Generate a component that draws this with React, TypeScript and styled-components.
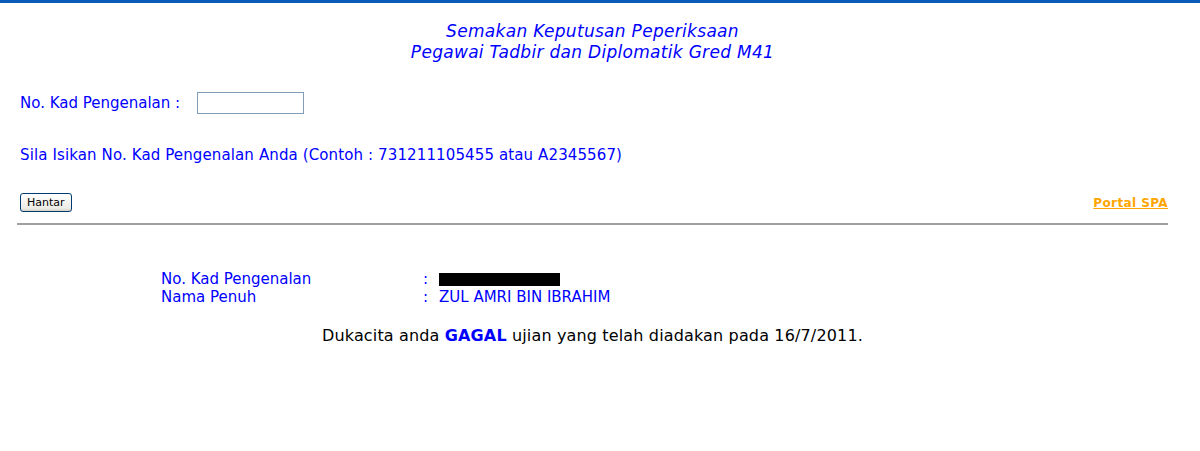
import React from "react";
import styled, { createGlobalStyle } from "styled-components";

const Global = createGlobalStyle`
  html, body { margin: 0; padding: 0; background: #fff; }
  body { font-family: "DejaVu Sans", Verdana, sans-serif; }
`;

const TopBar = styled.div`
  height: 3px;
  background: #0a5cb8;
`;

const Page = styled.div`
  padding: 0 32px 0 17px;
`;

const Title = styled.h1`
  margin: 18px 0 0;
  text-align: center;
  font-size: 17px;
  font-weight: normal;
  font-style: italic;
  letter-spacing: 0.3px;
  color: #0000ff;
  line-height: 21px;
`;

const Section = styled.div`
  padding-left: 3px;
  color: #0000ff;
  font-size: 15px;
`;

const FieldRow = styled.div`
  display: flex;
  align-items: center;
  margin-top: 29px;
  height: 22px;
`;

const FieldLabel = styled.span`
  width: 177px;
`;

const TextInput = styled.input`
  width: 107px;
  height: 22px;
  box-sizing: border-box;
  border: 1px solid #7f9db9;
  padding: 0 2px;
  font: inherit;
`;

const Hint = styled.div`
  margin-top: 32px;
  line-height: 18px;
  letter-spacing: 0.12px;
`;

const ActionRow = styled.div`
  display: flex;
  justify-content: space-between;
  align-items: center;
  margin-top: 29px;
  padding-left: 3px;
  padding-bottom: 11px;
  border-bottom: 2px solid #a0a0a0;
`;

const Button = styled.button`
  height: 19px;
  padding: 0 6px;
  font-family: "DejaVu Sans", Arial, sans-serif;
  font-size: 11px;
  color: #000;
  background: linear-gradient(#ffffff, #ecebe6 85%, #d6d0c5);
  border: 1px solid #003c74;
  border-radius: 3px;
  line-height: 15px;
`;

const PortalLink = styled.a`
  color: #ffa500;
  font-weight: bold;
  font-size: 12px;
  letter-spacing: 0.4px;
  text-decoration: underline;
  cursor: pointer;
`;

const Info = styled.div`
  margin-top: 45px;
  margin-left: 144px;
  display: grid;
  grid-template-columns: 262px 16px auto;
  color: #0000ff;
  font-size: 15px;
  line-height: 18px;
`;

const Redacted = styled.span`
  display: inline-block;
  width: 121px;
  height: 13px;
  background: #000;
  vertical-align: middle;
`;

const Result = styled.p`
  margin: 20px 0 0;
  text-align: center;
  font-size: 16px;
  letter-spacing: 0.15px;
  line-height: 20px;
  color: #000;
`;

const Strong = styled.b`
  color: #0000ff;
`;

export default function App() {
  return (
    <>
      <Global />
      <TopBar />
      <Page>
        <Title>
          Semakan Keputusan Peperiksaan
          <br />
          Pegawai Tadbir dan Diplomatik Gred M41
        </Title>
        <Section>
          <FieldRow>
            <FieldLabel>No. Kad Pengenalan :</FieldLabel>
            <TextInput type="text" />
          </FieldRow>
          <Hint>
            Sila Isikan No. Kad Pengenalan Anda (Contoh : 731211105455 atau A2345567)
          </Hint>
        </Section>
        <ActionRow>
          <Button>Hantar</Button>
          <PortalLink>Portal SPA</PortalLink>
        </ActionRow>
        <Info>
          <span>No. Kad Pengenalan</span>
          <span>:</span>
          <span>
            <Redacted />
          </span>
          <span>Nama Penuh</span>
          <span>:</span>
          <span>ZUL AMRI BIN IBRAHIM</span>
        </Info>
        <Result>
          Dukacita anda <Strong>GAGAL</Strong> ujian yang telah diadakan pada 16/7/2011.
        </Result>
      </Page>
    </>
  );
}
